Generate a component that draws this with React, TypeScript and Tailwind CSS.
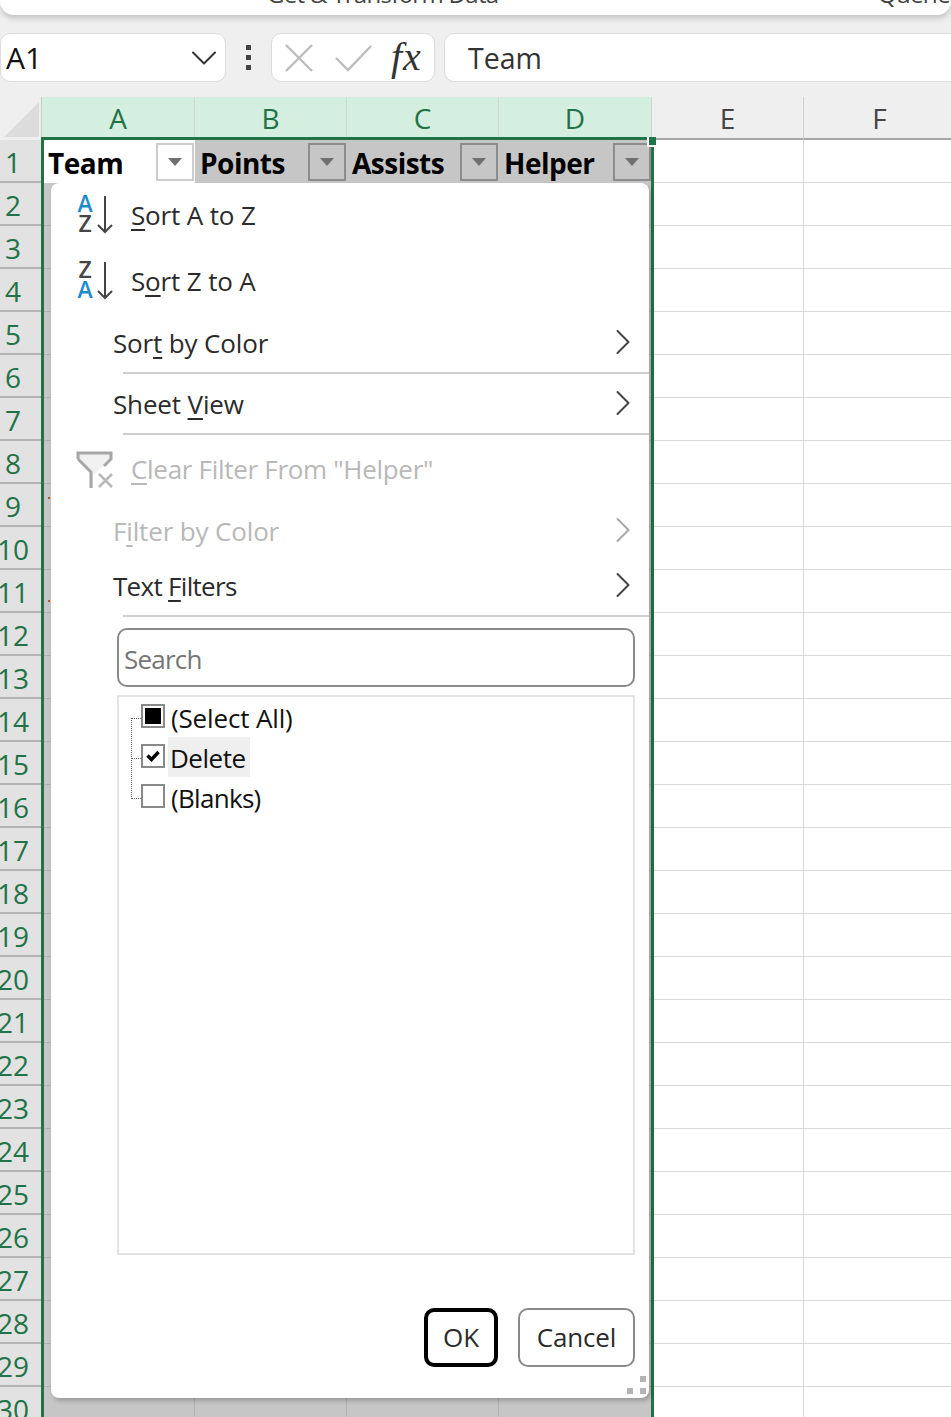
import { ChevronDown, ChevronRight } from 'lucide-react';

const COLS = [
  { label: 'A', w: 'w-[153px]', active: true },
  { label: 'B', w: 'w-[152px]', active: true },
  { label: 'C', w: 'w-[152px]', active: true },
  { label: 'D', w: 'w-[153px]', active: true },
  { label: 'E', w: 'w-[152px]', active: false },
  { label: 'F', w: 'w-[152px]', active: false },
];
const HEADERS = ['Team', 'Points', 'Assists', 'Helper'];
const ROWS = Array.from({ length: 29 }, (_, i) => i + 2);

function FilterButton({ active }: { active?: boolean }) {
  return (
    <div className={`absolute right-[1px] top-[3px] flex h-[38px] w-[38px] items-center justify-center border-2 ${active ? 'border-[#cccccc] bg-white' : 'border-[#8c8c8c] bg-[#c6c6c6]'}`}>
      <svg width="16" height="8" viewBox="0 0 16 8"><path d="M1 0h14L8 8z" fill="#707070" /></svg>
    </div>
  );
}

function SortIcon({ top, bottom, topBlue }: { top: string; bottom: string; topBlue: boolean }) {
  return (
    <svg width="38" height="40" viewBox="0 0 38 40" className="shrink-0">
      <text x="9" y="17" textAnchor="middle" fontSize="23" fontWeight="600" fontFamily="Open Sans" fill={topBlue ? '#1e8bcd' : '#444444'}>{top}</text>
      <text x="9" y="37" textAnchor="middle" fontSize="23" fontWeight="600" fontFamily="Open Sans" fill={topBlue ? '#444444' : '#1e8bcd'}>{bottom}</text>
      <path d="M29 1V37M22 30L29 37L36 30" fill="none" stroke="#444444" strokeWidth="2" />
    </svg>
  );
}

function ClearFilterIcon() {
  return (
    <svg width="38" height="38" viewBox="0 0 38 38" className="shrink-0">
      <path d="M1 2H36V8L17 24V37H14V22L1 8Z" fill="#f1f1f1" />
      <path d="M2 8V2H35V8L28 15M2 8L15 21V37" fill="none" stroke="#a6a6a6" strokeWidth="3" />
      <path d="M23 23L36 36M36 23L23 36" stroke="#b8b8b8" strokeWidth="2.5" />
    </svg>
  );
}

function Box({ state }: { state: 'mixed' | 'checked' | 'empty' }) {
  return (
    <div className="flex h-[24px] w-[24px] shrink-0 items-center justify-center border-2 border-[#8a8a8a] bg-white">
      {state === 'mixed' && <div className="h-[16px] w-[16px] bg-black" />}
      {state === 'checked' && (
        <svg width="14" height="12" viewBox="0 0 14 12"><path d="M1.5 5.5L5.5 9.5L12.5 2" fill="none" stroke="black" strokeWidth="3.4" /></svg>
      )}
    </div>
  );
}

function MenuRow({ h, disabled, arrow, border, children }: { h: string; disabled?: boolean; arrow?: boolean; border?: boolean; children: React.ReactNode }) {
  return (
    <div className={`relative flex ${h} items-center pl-[62px] pr-[4px] ${disabled ? 'text-[#b8b8b8]' : 'text-[#2b2b2b]'}`}>
      <span className="flex-1 pb-[2px]">{children}</span>
      {arrow && <ChevronRight size={44} strokeWidth={1.1} className={`-mt-[5px] ${disabled ? 'text-[#a8a8a8]' : 'text-[#444444]'}`} />}
      {border && <div className="absolute bottom-0 left-[72px] right-0 h-[2px] bg-[#cfcfcf]" />}
    </div>
  );
}

function FilterPopup() {
  return (
    <div className="absolute left-[51px] top-[183px] h-[1215px] w-[598px] rounded-[8px] bg-white text-[26px] tracking-[-0.15px] shadow-[2px_3px_4px_rgba(0,0,0,0.22)]">
      <div className="flex h-[66px] items-center gap-[16px] pl-[25px] pb-[2px] text-[#2b2b2b]">
        <SortIcon top="A" bottom="Z" topBlue />
        <span className="pl-[1px]"><u className="underline-offset-[4px]">S</u>ort A to Z</span>
      </div>
      <div className="flex h-[66px] items-center gap-[16px] pl-[25px] pb-[2px] text-[#2b2b2b]">
        <SortIcon top="Z" bottom="A" topBlue={false} />
        <span className="pl-[1px]">S<u className="underline-offset-[4px]">o</u>rt Z to A</span>
      </div>
      <MenuRow h="h-[59px]" arrow border>Sor<u className="underline-offset-[4px]">t</u> by Color</MenuRow>
      <MenuRow h="h-[61px] pt-[2px]" arrow border>Sheet <u className="underline-offset-[4px]">V</u>iew</MenuRow>
      <div className="flex h-[70px] items-center gap-[16px] pl-[25px] text-[#b8b8b8]">
        <ClearFilterIcon />
        <span className="pb-[2px] pl-[1px] tracking-[-0.3px]"><u className="underline-offset-[4px]">C</u>lear Filter From "Helper"</span>
      </div>
      <MenuRow h="h-[54px]" disabled arrow>F<u className="underline-offset-[4px]">i</u>lter by Color</MenuRow>
      <MenuRow h="h-[58px] pb-[2px]" arrow border><span className="tracking-[-0.7px]">Text <u className="underline-offset-[4px]">F</u>ilters</span></MenuRow>
      <div className="ml-[66px] mr-[14px] mt-[11px] flex h-[59px] items-center rounded-[10px] border-2 border-[#8a8a8a] px-[5px] pt-[3px] tracking-[-0.8px] text-[#767676]">Search</div>
      <div className="relative ml-[66px] mr-[14px] mt-[8px] h-[560px] border-2 border-[#e4e4e8] pl-[22px] pt-[3px] text-[#111111]">
        <div className="absolute left-[12px] top-[21px] h-[81px] w-[10px] border-b border-l border-dotted border-[#666666]" />
        <div className="absolute left-[12px] top-[21px] w-[10px] border-t border-dotted border-[#666666]" />
        <div className="absolute left-[12px] top-[61px] w-[10px] border-t border-dotted border-[#666666]" />
        <div className="relative flex h-[40px] items-center"><div className="-mt-[9px]"><Box state="mixed" /></div><span className="ml-[3px] px-[3px] pb-[4px]">(Select All)</span></div>
        <div className="relative flex h-[40px] items-center"><div className="-mt-[9px]"><Box state="checked" /></div><span className="-mt-[6px] ml-[3px] flex h-[40px] items-center bg-[#efefef] pl-[2px] pr-[4px] pt-[2px] tracking-[-0.5px]">Delete</span></div>
        <div className="relative flex h-[40px] items-center"><div className="-mt-[9px]"><Box state="empty" /></div><span className="ml-[3px] px-[3px] pb-[4px] tracking-[-0.7px]">(Blanks)</span></div>
      </div>
      <div className="mr-[14px] mt-[53px] flex justify-end gap-[20px] text-[#2b2b2b]">
        <div className="flex h-[59px] w-[74px] items-center justify-center rounded-[10px] border-[4px] border-black">OK</div>
        <div className="flex h-[59px] w-[117px] items-center justify-center rounded-[10px] border-2 border-[#8a8a8a]">Cancel</div>
      </div>
      <svg width="20" height="19" viewBox="0 0 20 19" className="absolute bottom-[3px] right-[2px]">
        <path d="M13 0h6v6h-6zM0 12h6v6H0zM13 12h6v6h-6z" fill="#b4b4b4" />
      </svg>
    </div>
  );
}

export default function App() {
  return (
    <div className="relative h-[1417px] w-[951px] overflow-hidden bg-[#efefef] font-['Open_Sans','Noto_Sans',sans-serif] text-[#222222]">
      {/* ribbon */}
      <div className="relative h-[15px] overflow-hidden rounded-b-[14px] bg-white shadow-[0_3px_6px_rgba(0,0,0,0.2)]">
        <div className="flex items-end text-[24px] leading-[30px] tracking-[-0.7px] text-[#444444] -mt-[21px] pl-[267px]">
          <span className="w-[611px] shrink-0">Get &amp; Transform Data</span>
          <span>Queries</span>
        </div>
      </div>
      {/* formula bar */}
      <div className="mt-[18px] flex h-[49px] items-stretch text-[28px]">
        <div className="flex w-[226px] items-center justify-between rounded-[10px] border border-[#dcdcdc] bg-white pl-[5px] text-[#111111]">
          <span className="text-[30px]">A1</span>
          <ChevronDown size={44} strokeWidth={1.1} className="-mr-[1px] text-[#333333]" />
        </div>
        <div className="flex w-[45px] flex-col items-center justify-center gap-[5px]">
          <div className="h-[5px] w-[5px] bg-[#444444]" />
          <div className="h-[5px] w-[5px] bg-[#444444]" />
          <div className="h-[5px] w-[5px] bg-[#444444]" />
        </div>
        <div className="relative flex w-[164px] items-center rounded-[10px] border border-[#dcdcdc] bg-white">
          <svg width="30" height="30" viewBox="0 0 30 30" className="ml-[12px]"><path d="M2 2L28 28M28 2L2 28" stroke="#bdbdbd" strokeWidth="2.4" /></svg>
          <svg width="38" height="28" viewBox="0 0 38 28" className="ml-[21px]"><path d="M1 14L13 26L36 2" fill="none" stroke="#bdbdbd" strokeWidth="2.4" /></svg>
          <span className="-mt-[2px] ml-[18px] font-['Liberation_Serif',serif] text-[40px] font-medium italic leading-none tracking-[1px] text-[#333333]">fx</span>
        </div>
        <div className="ml-[9px] flex flex-1 items-center rounded-l-[10px] border border-r-0 border-[#dcdcdc] bg-white pl-[23px] pt-[2px] text-[28.5px] text-[#333333]">Team</div>
      </div>
      {/* sheet */}
      <div className="mt-[15px]">
        <div className="flex h-[43px]">
          <div className="relative w-[42px] shrink-0 border-r border-[#c8c8c8]">
            <svg width="36" height="36" viewBox="0 0 36 36" className="absolute left-[4px] top-[5px]"><path d="M35 0V35H0Z" fill="#dcdcdc" /></svg>
          </div>
          {COLS.map((c) => (
            <div key={c.label} className={`${c.w} flex shrink-0 items-end justify-center border-r text-[28px] leading-[40px] ${c.active ? 'border-[#c8d8ce] bg-[#d4efe0] pb-[2px] text-[#1f7346]' : 'border-b-2 border-[#d0d0d0] border-b-[#a8a8a8] text-[#444444]'}`}>
              {c.label}
            </div>
          ))}
        </div>
        <div className="flex h-[43px]">
          <div className="flex w-[42px] shrink-0 items-center border-b-2 border-[#b4b4b4] bg-[#e2e2e2] pr-[16px] pt-[2px] text-[28px] text-[#1f7346]">
            <span className="w-full text-center">1</span>
          </div>
          {HEADERS.map((h, i) => (
            <div key={h} className={`relative ${COLS[i].w} flex shrink-0 items-center pt-[3px] text-[28px] font-bold tracking-[-0.5px] text-black ${i === 0 ? 'bg-white pl-[6px]' : 'bg-[#c6c6c6] pl-[5px]'}`}>
              {h}
              <FilterButton active={i === 0} />
            </div>
          ))}
          <div className="w-[152px] shrink-0 border-b border-r border-[#d9d9d9] bg-white" />
          <div className="w-[152px] shrink-0 border-b border-[#d9d9d9] bg-white" />
        </div>
        {ROWS.map((r) => (
          <div key={r} className="flex h-[43px]">
            <div className="flex w-[42px] shrink-0 items-center justify-center border-b-2 border-[#b4b4b4] bg-[#e2e2e2] pr-[16px] pt-[2px] text-[28px] text-[#1f7346]">
              <span className="whitespace-nowrap">{r}</span>
            </div>
            {COLS.slice(0, 4).map((c) => (
              <div key={c.label} className={`${c.w} shrink-0 border-b border-r border-[#b0b0b0] bg-[#c6c6c6]`} />
            ))}
            <div className="w-[152px] shrink-0 border-b border-r border-[#d9d9d9] bg-white" />
            <div className="w-[152px] shrink-0 border-b border-[#d9d9d9] bg-white" />
          </div>
        ))}
      </div>
      {/* selection outline */}
      <div className="absolute left-[41px] top-[137px] h-[1300px] w-[613px] border-[3px] border-[#1f7346]" />
      <div className="absolute left-[647px] top-[137px] h-[10px] w-[9px] border-b-2 border-l-2 border-white bg-[#1f7346]" />
      <div className="absolute left-[48px] top-[497px] h-[2px] w-[2px] bg-[#b45a1e]" />
      <div className="absolute left-[48px] top-[600px] h-[2px] w-[2px] bg-[#b45a1e]" />
      <FilterPopup />
    </div>
  );
}
